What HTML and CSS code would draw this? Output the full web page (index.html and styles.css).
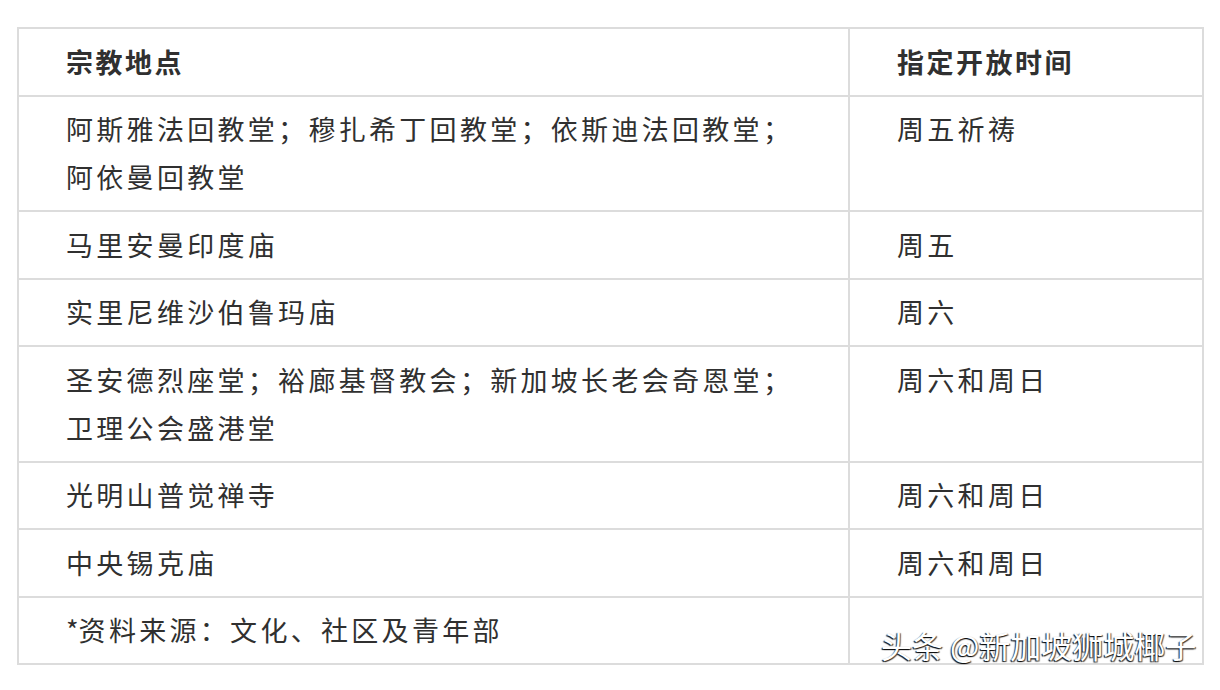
FILE: index.html
```html
<!DOCTYPE html>
<html lang="zh-CN">
<head>
<meta charset="utf-8">
<title>宗教地点</title>
<link rel="stylesheet" href="styles.css">
</head>
<body>
<div class="page">
  <table class="schedule">
    <colgroup>
      <col class="col-place">
      <col class="col-time">
    </colgroup>
    <thead>
      <tr><th>宗教地点</th><th>指定开放时间</th></tr>
    </thead>
    <tbody>
      <tr><td>阿斯雅法回教堂；穆扎希丁回教堂；依斯迪法回教堂；阿依曼回教堂</td><td>周五祈祷</td></tr>
      <tr><td>马里安曼印度庙</td><td>周五</td></tr>
      <tr><td>实里尼维沙伯鲁玛庙</td><td>周六</td></tr>
      <tr><td>圣安德烈座堂；裕廊基督教会；新加坡长老会奇恩堂；卫理公会盛港堂</td><td>周六和周日</td></tr>
      <tr><td>光明山普觉禅寺</td><td>周六和周日</td></tr>
      <tr><td>中央锡克庙</td><td>周六和周日</td></tr>
      <tr><td><span class="mark">*</span>资料来源：文化、社区及青年部</td><td></td></tr>
    </tbody>
  </table>
  <div class="watermark">头条 @新加坡狮城椰子</div>
</div>
</body>
</html>
```
FILE: styles.css
```css
html, body {
  margin: 0;
  padding: 0;
  background: #ffffff;
}
.page {
  position: relative;
  width: 1220px;
  height: 690px;
  padding: 27px 0 0 17px;
  box-sizing: border-box;
  font-family: "Noto Sans CJK SC", "Noto Sans", sans-serif;
  color: #303030;
}
.schedule {
  border-collapse: collapse;
  table-layout: fixed;
  width: 1185px;
}
.col-place { width: 831px; }
.col-time { width: 354px; }
.schedule th,
.schedule td {
  border: 2px solid #dcdcdc;
  padding: 8.75px 40px 8.75px 47px;
  font-size: 27px;
  line-height: 48px;
  letter-spacing: 3.3px;
  text-align: left;
  vertical-align: top;
}
.schedule th {
  font-weight: 700;
  letter-spacing: 2.5px;
}
.schedule td {
  font-weight: 400;
}
.mark {
  letter-spacing: 0;
}
.watermark {
  position: absolute;
  top: 625px;
  left: 881px;
  font-family: "Noto Sans CJK SC", sans-serif;
  font-size: 31px;
  line-height: 40px;
  color: #ffffff;
  white-space: nowrap;
  text-shadow: -1px 1px 1px rgba(0,0,0,0.9), 1px 1px 1px rgba(0,0,0,0.7);
}
```
